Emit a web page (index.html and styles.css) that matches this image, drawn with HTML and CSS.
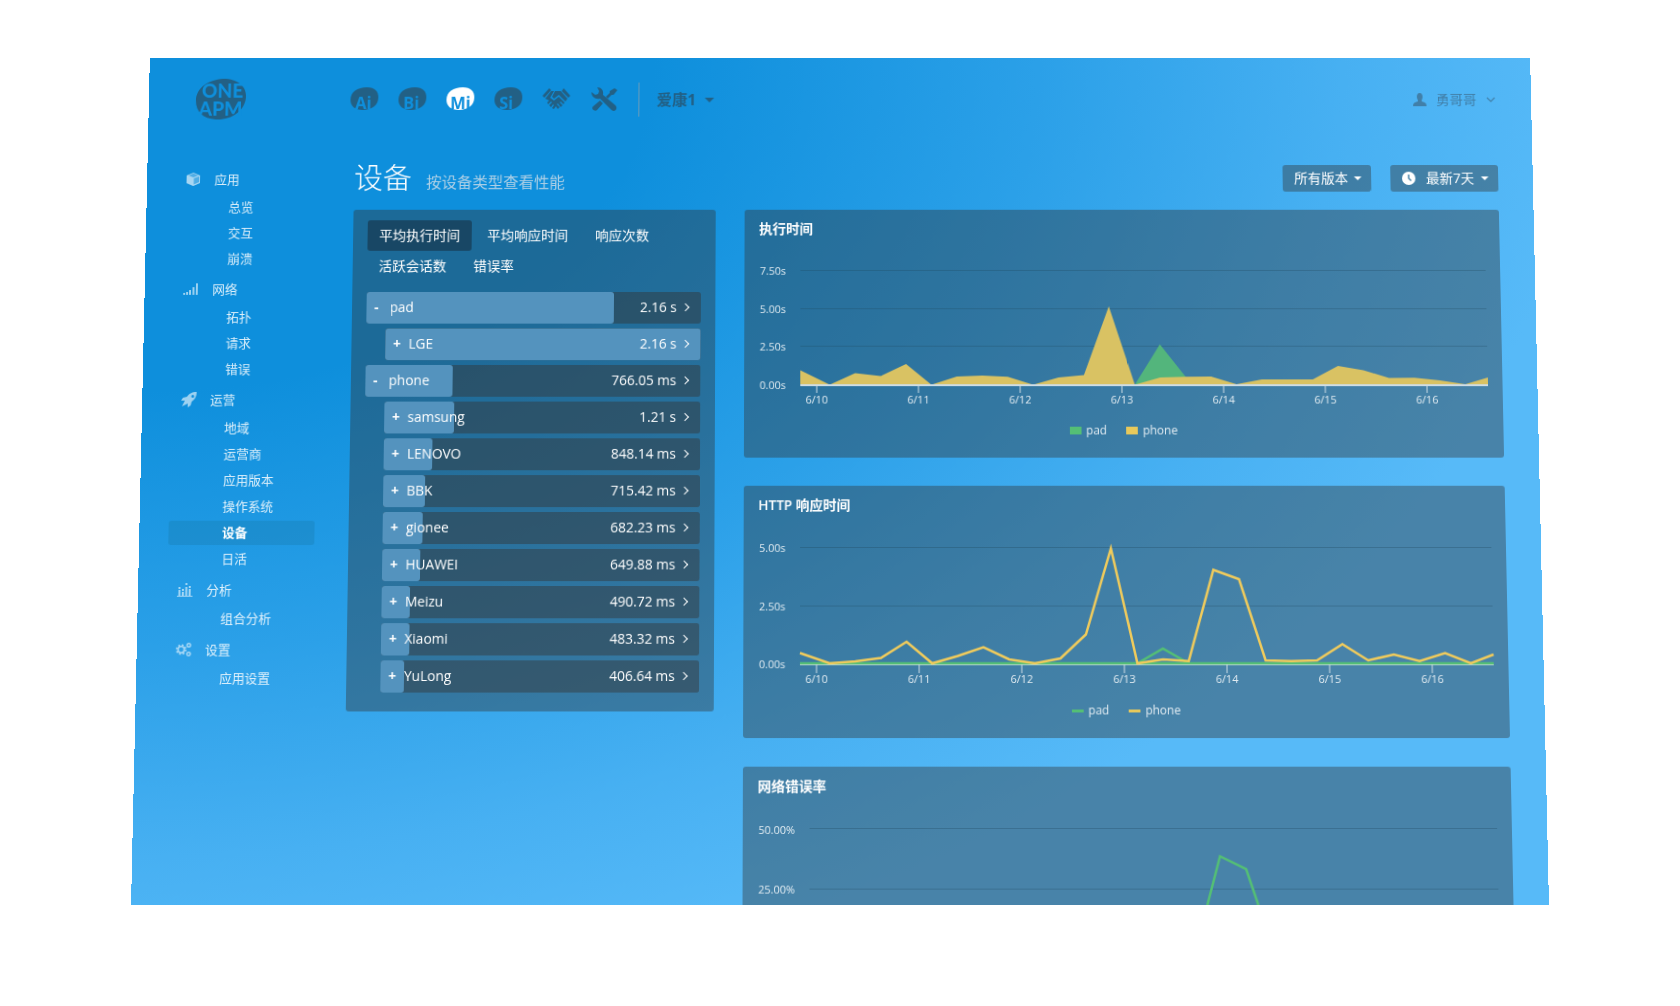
FILE: index.html
```html
<!DOCTYPE html>
<html lang="zh-CN">
<head>
<meta charset="utf-8">
<meta name="viewport" content="width=device-width, initial-scale=1">
<title>OneAPM Mi - 设备</title>
<link rel="stylesheet" href="styles.css">
</head>
<body>
<div class="screen">
  <header class="topbar">
    <a class="logo" href="#" aria-label="OneAPM">
      <svg width="54" height="44" viewBox="0 0 54 44">
        <path class="blob" d="M1 23C1 10 13 1 29 0C44 0 54 8 53 20C52 34 38 44 22 43C9 42 1 35 1 23Z"/>
        <text class="logo-text" x="7" y="20">ONE</text>
        <text class="logo-text" x="4" y="39">APM</text>
      </svg>
    </a>
    <nav class="products" aria-label="产品">
      <a href="#"><svg width="30" height="26" viewBox="0 0 30 26"><path class="blob" d="M0 13C0 5 7 0 17 0C25 0 29 4 29 11C29 19 22 24 13 24C5 24 0 20 0 13Z"/><text class="mark-text" x="5" y="23">Ai</text></svg></a>
      <a href="#"><svg width="30" height="26" viewBox="0 0 30 26"><path class="blob" d="M0 13C0 5 7 0 17 0C25 0 29 4 29 11C29 19 22 24 13 24C5 24 0 20 0 13Z"/><text class="mark-text" x="5" y="23">Bi</text></svg></a>
      <a class="current" href="#" aria-current="page"><svg width="30" height="26" viewBox="0 0 30 26"><path class="blob" d="M0 13C0 5 7 0 17 0C25 0 29 4 29 11C29 19 22 24 13 24C5 24 0 20 0 13Z"/><text class="mark-text" x="4" y="23">Mi</text></svg></a>
      <a href="#"><svg width="30" height="26" viewBox="0 0 30 26"><path class="blob" d="M0 13C0 5 7 0 17 0C25 0 29 4 29 11C29 19 22 24 13 24C5 24 0 20 0 13Z"/><text class="mark-text" x="5" y="23">Si</text></svg></a>
      <a href="#" aria-label="合作"><svg width="30" height="26" viewBox="0 0 30 26">
        <path class="blob" d="M7 1L9 3L2 11L0 9ZM22 1L29 9L27 11L20 4ZM13 4L19 4L26 12L24 15L17 8L12 12L10 10Z"/>
        <path class="blob" d="M9 4L12 4L8 11L12 14L17 10L23 16L22 18L19 15L18 16L21 19L19 21L16 17L15 18L18 21L16 23L14 20L12 23L10 22L12 19L11 18L9 21L7 19L10 16L9 15L6 18L5 16L7 14L3 12Z"/>
      </svg></a>
      <a href="#" aria-label="工具"><svg width="30" height="26" viewBox="0 0 30 26">
        <path class="blob" d="M7 0C11 0 14 3 13 8L26 19C29 22 26 27 22 24L10 12C5 13 1 10 1 5L5 8L8 7L9 4Z"/>
        <path class="blob" d="M25 1L28 3L24 8L22 8L18 12L16 10L20 6L20 4ZM10 14L13 17L7 24C5 26 0 23 3 20Z"/>
      </svg></a>
    </nav>
    <label class="app-picker">
      <select aria-label="当前应用"><option>爱康1</option></select>
      <i class="caret"></i>
    </label>
    <button class="user" type="button">
      <svg width="14" height="14" viewBox="0 0 14 14"><path d="M7 0C9 0 10 2 10 4C10 6 9 7 9 8L9 9C12 10 14 10 14 14H0C0 10 2 10 5 9L5 8C5 7 4 6 4 4C4 2 5 0 7 0Z" fill="currentColor"/></svg>
      <span>勇哥哥</span>
      <svg width="10" height="6" viewBox="0 0 10 6"><path d="M1 1L5 5L9 1" fill="none" stroke="currentColor" stroke-width="1.2"/></svg>
    </button>
  </header>

  <div class="body">
    <nav class="sidebar" aria-label="主菜单">
      <section>
        <h2><svg width="16" height="16" viewBox="0 0 16 16"><path d="M8 2L14 4V12L8 15L1 12V4Z" fill="currentColor" opacity=".45"/><path d="M8 1L15 4V12L8 15L1 12V4ZM8.500 7V13.500L14 11V5ZM8 2L3 4L8 6L13 4Z" fill="currentColor" fill-rule="evenodd"/></svg>应用</h2>
        <a href="#">总览</a><a href="#">交互</a><a href="#">崩溃</a>
      </section>
      <section>
        <h2><svg width="16" height="16" viewBox="0 0 16 16"><path d="M0 12h2v2h-2zM3 11h2v3h-2zM6 9h2v5h-2zM9.500 6h2v8h-2zM13 2h2v12h-2z" fill="currentColor"/></svg>网络</h2>
        <a href="#">拓扑</a><a href="#">请求</a><a href="#">错误</a>
      </section>
      <section>
        <h2><svg width="16" height="16" viewBox="0 0 16 16"><path d="M16 0C11 0 8 2 6 5L2 6L0 9L4 9L3 11L5 13L7 12V16L10 14L11 10C14 8 16 5 16 0ZM12 3A1.500 1.500 0 1 1 12 6A1.500 1.500 0 1 1 12 3ZM3 11L1 15L5 13Z" fill="currentColor" fill-rule="evenodd"/></svg>运营</h2>
        <a href="#">地域</a><a href="#">运营商</a><a href="#">应用版本</a><a href="#">操作系统</a><a class="current" href="#" aria-current="page">设备</a><a href="#">日活</a>
      </section>
      <section>
        <h2><svg width="16" height="16" viewBox="0 0 16 16"><path d="M0 14.500H16" stroke="currentColor"/><path d="M2.500 14V8M6 14V10M9.500 14V5M13 14V7" fill="none" stroke="currentColor" stroke-width="2"/><path d="M1.500 5h2v2h-2zM5 7h2v2h-2zM8.500 1h2v2h-2zM12 4h2v2h-2z" fill="currentColor"/></svg>分析</h2>
        <a href="#">组合分析</a>
      </section>
      <section>
        <h2><svg width="16" height="16" viewBox="0 0 16 16"><g fill="none" stroke="currentColor"><circle cx="5.500" cy="8" r="3.200" stroke-width="1.600"/><circle cx="5.500" cy="8" r="4.700" stroke-width="1.600" stroke-dasharray="1.800 1.890"/><circle cx="13.200" cy="3.500" r="1.800" stroke-width="1.400"/><circle cx="13.200" cy="12.500" r="1.800" stroke-width="1.400"/></g></svg>设置</h2>
        <a href="#">应用设置</a>
      </section>
    </nav>

    <main>
      <div class="heading">
        <h1>设备</h1>
        <p>按设备类型查看性能</p>
        <div class="filters">
          <label class="picker"><select aria-label="版本"><option>所有版本</option></select><i class="caret"></i></label>
          <label class="picker">
            <svg width="14" height="14" viewBox="0 0 14 14"><circle cx="7" cy="7" r="7" fill="#fff"/><path d="M7 3V7L9.500 9.500" fill="none" stroke="#4883a8" stroke-width="1.500"/></svg>
            <select aria-label="时间范围"><option>最新7天</option></select><i class="caret"></i>
          </label>
        </div>
      </div>

      <div class="columns">
        <section class="panel devices">
          <div class="tabs" role="tablist">
            <button type="button" role="tab" aria-selected="true">平均执行时间</button>
            <button type="button" role="tab" aria-selected="false">平均响应时间</button>
            <button type="button" role="tab" aria-selected="false">响应次数</button>
            <button type="button" role="tab" aria-selected="false">活跃会话数</button>
            <button type="button" role="tab" aria-selected="false">错误率</button>
          </div>
          <ul class="rows">
            <li><i class="fill" style="width:74%"></i><button type="button">-</button><span>pad</span><a href="#">2.16 s</a></li>
            <li class="child"><i class="fill" style="width:100%"></i><button type="button">+</button><span>LGE</span><a href="#">2.16 s</a></li>
            <li><i class="fill" style="width:26%"></i><button type="button">-</button><span>phone</span><a href="#">766.05 ms</a></li>
            <li class="child"><i class="fill" style="width:22%"></i><button type="button">+</button><span>samsung</span><a href="#">1.21 s</a></li>
            <li class="child"><i class="fill" style="width:15.3%"></i><button type="button">+</button><span>LENOVO</span><a href="#">848.14 ms</a></li>
            <li class="child"><i class="fill" style="width:13.2%"></i><button type="button">+</button><span>BBK</span><a href="#">715.42 ms</a></li>
            <li class="child"><i class="fill" style="width:12.5%"></i><button type="button">+</button><span>gionee</span><a href="#">682.23 ms</a></li>
            <li class="child"><i class="fill" style="width:12%"></i><button type="button">+</button><span>HUAWEI</span><a href="#">649.88 ms</a></li>
            <li class="child"><i class="fill" style="width:8.9%"></i><button type="button">+</button><span>Meizu</span><a href="#">490.72 ms</a></li>
            <li class="child"><i class="fill" style="width:8.8%"></i><button type="button">+</button><span>Xiaomi</span><a href="#">483.32 ms</a></li>
            <li class="child"><i class="fill" style="width:7.4%"></i><button type="button">+</button><span>YuLong</span><a href="#">406.64 ms</a></li>
          </ul>
        </section>

        <div class="charts">
          <section class="panel chart">
            <h3>执行时间</h3>
            <svg viewBox="0 0 753 166">
              <path class="grid" d="M43 23.500H753M43 63.500H753M43 102.500H753"/>
              <path class="area pad" d="M388.400 142.500L414.600 100.500L440.900 134.200V142.500Z"/>
              <path class="area phone" d="M43 142.500V127.500L73.400 142.500L99.600 130.500L125.900 133.500L152.200 121L178.400 142.500L204.600 134L230.900 133L257.200 134.200L283.400 142.500L309.600 135L335.900 132.500L362.200 61L388.400 142.500L414.600 135L440.900 134.200L467.200 134L493.400 142L519.600 137L545.900 137L572.200 137L598.400 123L624.600 127.500L650.900 135.500L677.200 135.200L703.400 138L729.600 142L753 135V142.500Z"/>
              <path class="axis" d="M43 143H753"/>
              <path class="tick" d="M60 143V151M165 143V151M270 143V151M375 143V151M480 143V151M585 143V151M690 143V151"/>
              <g class="y"><text x="1" y="28">7.50s</text><text x="1" y="68">5.00s</text><text x="1" y="107">2.50s</text><text x="1" y="147">0.00s</text></g>
              <g class="x"><text x="60" y="162">6/10</text><text x="165" y="162">6/11</text><text x="270" y="162">6/12</text><text x="375" y="162">6/13</text><text x="480" y="162">6/14</text><text x="585" y="162">6/15</text><text x="690" y="162">6/16</text></g>
            </svg>
            <ul class="legend"><li><i class="pad"></i>pad</li><li><i class="phone"></i>phone</li></ul>
          </section>

          <section class="panel chart">
            <h3>HTTP 响应时间</h3>
            <svg viewBox="0 0 753 166">
              <path class="grid" d="M43 23.500H753M43 83.500H753"/>
              <path class="axis" d="M43 143H753"/>
              <path class="line pad" d="M43 142H753M388.400 142L414.600 127L440.900 142"/>
              <path class="line phone" d="M43 131.500L73.400 142L99.600 140L125.900 136.500L152.200 120L178.400 142L204.600 134.500L230.900 125.500L257.200 138L283.400 142L309.600 137L335.900 112.500L362.200 24.500L388.400 142L414.600 138L440.900 139.700L467.200 46.500L493.400 56L519.600 139L545.900 139.700L572.200 139L598.400 122.500L624.600 139L650.900 133L677.200 139.700L703.400 131.500L729.600 142L753 133"/>
              <path class="tick" d="M60 143V152M165 143V152M270 143V152M375 143V152M480 143V152M585 143V152M690 143V152"/>
              <g class="y"><text x="1" y="28">5.00s</text><text x="1" y="88">2.50s</text><text x="1" y="147">0.00s</text></g>
              <g class="x"><text x="60" y="162">6/10</text><text x="165" y="162">6/11</text><text x="270" y="162">6/12</text><text x="375" y="162">6/13</text><text x="480" y="162">6/14</text><text x="585" y="162">6/15</text><text x="690" y="162">6/16</text></g>
            </svg>
            <ul class="legend lines"><li><i class="pad"></i>pad</li><li><i class="phone"></i>phone</li></ul>
          </section>

          <section class="panel chart">
            <h3>网络错误率</h3>
            <svg viewBox="0 0 753 166">
              <path class="grid" d="M53 22.500H753M53 83.500H753"/>
              <path class="line pad" d="M53 142H445.500L470.500 50.500L497 63.500L523 142H753"/>
              <g class="y"><text x="1" y="28">50.00%</text><text x="1" y="88">25.00%</text></g>
            </svg>
          </section>
        </div>
      </div>
    </main>
  </div>
</div>
</body>
</html>
```
FILE: styles.css
```css
* { box-sizing: border-box; }

body {
  margin: 0;
  background: #fff;
  overflow: hidden;
  font-family: "Open Sans", "Noto Sans CJK SC", sans-serif;
  font-size: 14px;
  line-height: 20px;
  color: #fff;
}

h1, h2, h3, p, ul { margin: 0; padding: 0; font-weight: 400; }
ul { list-style: none; }
a { color: inherit; text-decoration: none; }
svg { display: block; overflow: visible; }

button, select {
  appearance: none;
  margin: 0;
  padding: 0;
  border: 0;
  background: none;
  color: inherit;
  font: inherit;
  cursor: pointer;
}

/* the whole app is shown as a screen leaning slightly backwards */
.screen {
  height: calc(100vh - 133px);
  margin: 58px 120px 0;
  overflow: hidden;
  transform-origin: top center;
  transform: perspective(5480px) translateZ(-237px) rotateX(10deg);
  background: radial-gradient(ellipse 96% 105% at 0 0, #0e8fdc 0, #0e8fdc 38%, #2ba0e8 67%, #47b0f2 90%, #57baf8 108%);
}

/* top bar */
.topbar {
  display: flex;
  align-items: center;
  height: 88px;
  padding: 0 37px 0 48px;
  color: #226085;
}
.logo { width: 162px; }
.blob { fill: #226085; }
.current .blob { fill: #fff; }
.logo-text { font-family: Lato, sans-serif; font-size: 20px; font-weight: 900; fill: #0e8fdc; }
.mark-text { font-family: "Open Sans", sans-serif; font-size: 17px; font-weight: 700; fill: #0e8fdc; }
.products {
  display: flex;
  gap: 20px;
  padding-right: 20px;
}
.app-picker {
  display: flex;
  align-items: center;
  gap: 8px;
  height: 36px;
  padding-left: 18px;
  border-left: 1px solid #6c9cb8;
  font-size: 16px;
  font-weight: 700;
}
.caret {
  width: 0;
  border: 4px solid transparent;
  border-top-color: currentColor;
  border-bottom: 0;
}
.app-picker .caret { border-width: 5px 5px 0; }
.user {
  display: flex;
  align-items: center;
  gap: 10px;
  margin-left: auto;
  color: #417fa8;
}

/* layout */
.body {
  display: flex;
  padding: 24px 36px 0 30px;
}

.sidebar {
  flex: none;
  width: 150px;
  margin-right: 35px;
  font-size: 13px;
  color: rgba(255, 255, 255, .85);
}
.sidebar section { margin-bottom: 3px; }
.sidebar h2 {
  display: flex;
  align-items: center;
  gap: 14px;
  height: 31px;
  padding-left: 10px;
  font-size: 13px;
}
.sidebar h2 svg { opacity: .7; }
.sidebar a {
  display: block;
  height: 25px;
  margin-top: 2px;
  padding-left: 55px;
  border-radius: 3px;
  line-height: 25px;
}
.sidebar .current {
  background: rgba(20, 110, 150, .25);
  color: #fff;
  font-weight: 700;
}

main { flex: 1; min-width: 0; }

.heading {
  display: flex;
  align-items: center;
  height: 29px;
  margin-bottom: 19px;
}
.heading h1 { font-size: 30px; font-weight: 300; line-height: 28px; padding-bottom: 2px; }
.heading p { padding: 8px 0 0 15px; font-size: 16px; color: #aed0e6; }
.filters { display: flex; gap: 20px; margin-left: auto; }
.picker {
  display: flex;
  align-items: center;
  height: 28px;
  padding: 0 10px 0 12px;
  border-radius: 3px;
  background: rgba(51, 51, 51, .4);
}
.picker svg { margin-right: 11px; }
.picker .caret { margin-left: 6px; }

.columns { display: flex; align-items: flex-start; gap: 30px; }
.panel { border-radius: 3px; background: rgba(51, 51, 51, .4); }

/* device list */
.devices {
  flex: none;
  width: 376px;
  padding: 11px 15px 19px;
}
.tabs {
  display: flex;
  flex-wrap: wrap;
  gap: 0 4px;
  margin-bottom: 11px;
}
.tabs button {
  height: 32px;
  padding: 0 12px;
  border-radius: 3px;
}
.tabs [aria-selected="true"] { background: rgba(20, 20, 26, .4); }

.rows { display: grid; gap: 5px; }
.rows li {
  position: relative;
  display: flex;
  align-items: center;
  height: 33px;
  padding: 0 11px 1px 8px;
  border-radius: 3px;
  background: rgba(51, 51, 51, .45);
}
.rows .child { margin-left: 20px; }
.rows .fill {
  position: absolute;
  inset: 0 auto 0 0;
  border-radius: 3px;
  background: #5493be;
}
.rows button { position: relative; width: 16px; text-align: left; font-weight: 700; }
.rows span { position: relative; flex: 1; }
.rows a {
  position: relative;
  display: flex;
  align-items: center;
  gap: 6px;
}
.rows a::after {
  content: "";
  width: 5px;
  height: 5px;
  margin-right: 2px;
  border: solid #fff;
  border-width: 1px 1px 0 0;
  transform: rotate(45deg);
}

/* charts */
.charts { flex: 1; min-width: 0; display: grid; gap: 29px; }
.chart { padding: 10px 15px 18px; }
.chart h3 { margin-bottom: 10px; font-size: 14px; font-weight: 600; }
.chart svg { width: 100%; }
.chart path { fill: none; }
.chart .grid { stroke: rgba(30, 70, 90, .3); }
.chart .axis { stroke: #cfdde5; stroke-width: 2; }
.chart .tick { stroke: #cfdde5; }
.chart .area.pad { fill: #53b57c; }
.chart .area.phone { fill: #d9c263; }
.chart .line { stroke-width: 2.5; }
.chart .line.pad { stroke: #54bf75; }
.chart .line.phone { stroke: #f0cb5c; }
.chart text { font-size: 11px; fill: #e2ecf2; }
.chart .x { text-anchor: middle; }

.legend {
  display: flex;
  justify-content: center;
  gap: 20px;
  margin-top: 14px;
  font-size: 12px;
  color: #e2ecf2;
}
.legend li { display: flex; align-items: center; gap: 5px; }
.legend i { width: 12px; height: 8px; }
.legend.lines i { height: 3px; }
.legend .pad { background: #54bf75; }
.legend .phone { background: #e8c95b; }
```
